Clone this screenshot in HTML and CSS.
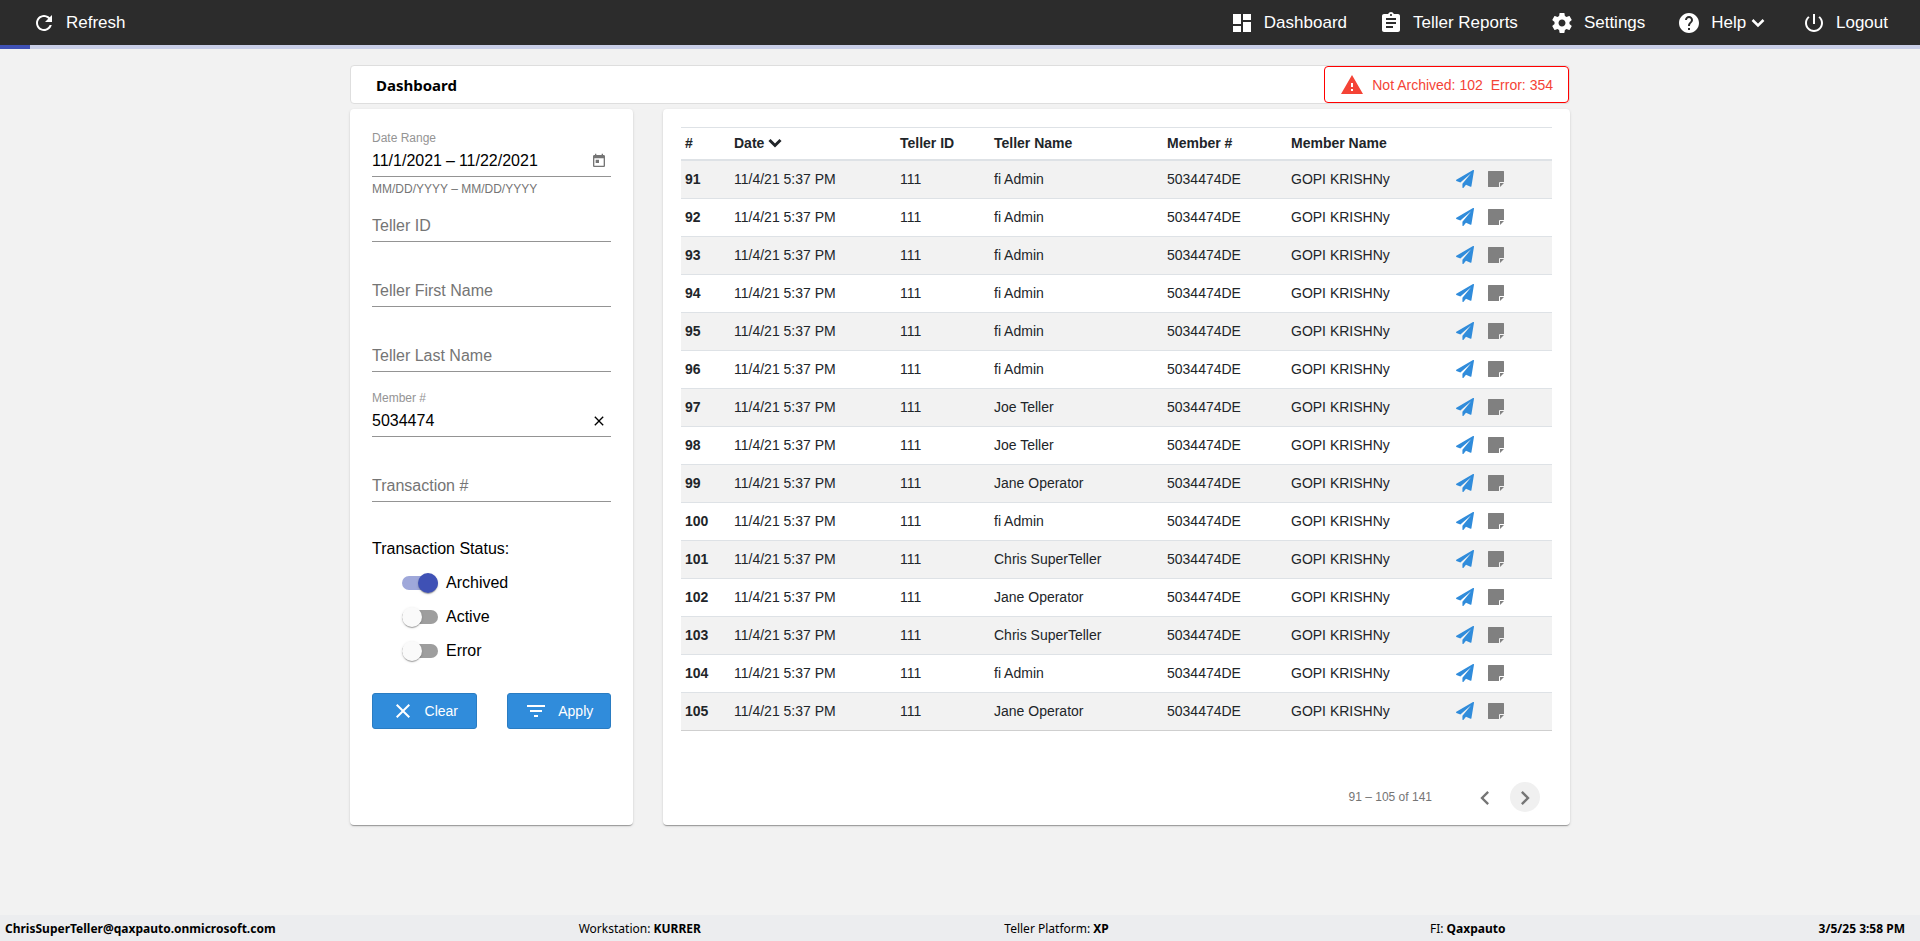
FILE: index.html
```html
<!DOCTYPE html>
<html lang="en">
  <head>
    <title>Dashboard</title>
    <meta charset="utf-8" />
    <meta name="viewport" content="width=device-width, initial-scale=1" />
    <link rel="stylesheet" href="styles.css">
  </head>
  <body>
    <svg class="sprite" aria-hidden="true">
      <symbol id="icon-plane" viewBox="0 0 1792 1792">
        <path d="M1764 11q33 24 27 64l-256 1536q-5 29-32 45-14 8-31 8-11 0-24-5l-453-185-242 295q-18 23-49 23-13 0-22-4-19-7-30.5-23.5t-11.5-36.5v-349l864-1059-1069 925-395-162q-37-14-40-55-2-40 32-59l1664-960q15-9 32-9 20 0 36 11z" />
      </symbol>
      <symbol id="icon-note" viewBox="0 0 16 16">
        <path d="M.5 0h15q.5 0 .5.5V11h-4q-1 0-1 1v4H.5q-.5 0-.5-.5V.5Q0 0 .5 0zM12 12h4l-4 4z" />
      </symbol>
      <symbol id="icon-close" viewBox="0 0 24 24">
        <path d="M19 6.410 17.590 5 12 10.590 6.410 5 5 6.410 10.590 12 5 17.590 6.410 19 12 13.410 17.590 19 19 17.590 13.410 12z" />
      </symbol>
    </svg>

    <header class="topbar">
      <button type="button" class="nav-item">
        <svg class="icon" viewBox="0 0 24 24"><path d="M17.650 6.350C16.200 4.900 14.210 4 12 4c-4.420 0-7.990 3.580-7.990 8s3.570 8 7.990 8c3.730 0 6.840-2.550 7.730-6h-2.080c-.82 2.330-3.040 4-5.650 4-3.310 0-6-2.690-6-6s2.690-6 6-6c1.660 0 3.140.69 4.220 1.780L13 11h7V4l-2.350 2.350z" /></svg>
        Refresh
      </button>

      <nav class="nav">
        <a href="#" class="nav-item">
          <svg class="icon" viewBox="0 0 24 24"><path d="M3 13h8V3H3v10zm0 8h8v-6H3v6zm10 0h8V11h-8v10zm0-18v6h8V3h-8z" /></svg>
          Dashboard
        </a>
        <a href="#" class="nav-item">
          <svg class="icon" viewBox="0 0 24 24"><path d="M19 3h-4.180C14.400 1.840 13.300 1 12 1c-1.300 0-2.400.84-2.820 2H5c-1.100 0-2 .9-2 2v14c0 1.100.9 2 2 2h14c1.100 0 2-.9 2-2V5c0-1.100-.9-2-2-2zm-7 0c.55 0 1 .45 1 1s-.45 1-1 1-1-.45-1-1 .45-1 1-1zm2 14H7v-2h7v2zm3-4H7v-2h10v2zm0-4H7V7h10v2z" /></svg>
          Teller Reports
        </a>
        <a href="#" class="nav-item">
          <svg class="icon" viewBox="0 0 24 24"><path d="M19.430 12.980c.04-.32.07-.64.07-.98s-.03-.66-.07-.98l2.110-1.650c.19-.15.24-.42.12-.64l-2-3.460c-.12-.22-.39-.3-.61-.22l-2.490 1c-.52-.4-1.080-.73-1.690-.98l-.38-2.650C14.460 2.180 14.250 2 14 2h-4c-.25 0-.46.18-.49.42l-.38 2.650c-.61.25-1.170.59-1.690.98l-2.490-1c-.23-.09-.49 0-.61.22l-2 3.460c-.13.22-.07.49.12.64l2.110 1.650c-.04.32-.07.65-.07.98s.03.66.07.98l-2.110 1.650c-.19.15-.24.42-.12.64l2 3.460c.12.22.39.3.61.22l2.490-1c.52.4 1.080.73 1.690.98l.38 2.650c.03.24.24.42.49.42h4c.25 0 .46-.18.49-.42l.38-2.650c.61-.25 1.170-.59 1.690-.98l2.490 1c.23.09.49 0 .61-.22l2-3.460c.12-.22.07-.49-.12-.64l-2.110-1.650zM12 15.500c-1.930 0-3.500-1.570-3.500-3.500s1.570-3.500 3.500-3.500 3.500 1.570 3.500 3.500-1.570 3.500-3.500 3.500z" /></svg>
          Settings
        </a>
        <button type="button" class="nav-item">
          <svg class="icon" viewBox="0 0 24 24"><path d="M12 2C6.480 2 2 6.480 2 12s4.480 10 10 10 10-4.480 10-10S17.520 2 12 2zm1 17h-2v-2h2v2zm2.070-7.750l-.9.92C13.450 12.900 13 13.500 13 15h-2v-.5c0-1.100.45-2.100 1.170-2.830l1.240-1.260c.37-.36.59-.86.59-1.410 0-1.100-.9-2-2-2s-2 .9-2 2H8c0-2.210 1.790-4 4-4s4 1.790 4 4c0 .88-.36 1.680-.93 2.250z" /></svg>
          <span>
            Help
            <svg class="chevron" viewBox="0 0 14 10"><path d="M1.500 2l5.500 5.500L12.500 2" /></svg>
          </span>
        </button>
        <a href="#" class="nav-item">
          <svg class="icon" viewBox="0 0 24 24"><path d="M13 3h-2v10h2V3zm4.830 2.170l-1.420 1.420C17.990 7.860 19 9.810 19 12c0 3.870-3.130 7-7 7s-7-3.130-7-7c0-2.190 1.010-4.140 2.580-5.420L6.170 5.170C4.230 6.820 3 9.260 3 12c0 4.970 4.030 9 9 9s9-4.030 9-9c0-2.740-1.230-5.180-3.170-6.830z" /></svg>
          Logout
        </a>
      </nav>
    </header>

    <div class="progress"><div class="progress-fill"></div></div>

    <main class="content">
      <div class="title-bar">
        <h1>Dashboard</h1>
        <div class="alert">
          <svg class="alert-icon" viewBox="0 0 24 24"><path d="M1 21h22L12 2 1 21zm12-3h-2v-2h2v2zm0-4h-2v-4h2v4z" /></svg>
          <span>Not Archived: 102</span>
          <span>Error: 354</span>
        </div>
      </div>

      <div class="panels">
        <form class="panel filters">
          <div class="field">
            <label for="date-start">Date Range</label>
            <div class="control">
              <input type="text" id="date-start" class="date-start" value="11/1/2021" />
              <span>–</span>
              <input type="text" class="date-end" value="11/22/2021" aria-label="End date" />
              <button type="button" class="icon-button" aria-label="Open calendar">
                <svg class="calendar" viewBox="0 0 24 24"><path d="M19 3h-1V1h-2v2H8V1H6v2H5c-1.110 0-1.990.9-1.990 2L3 19c0 1.100.89 2 2 2h14c1.100 0 2-.9 2-2V5c0-1.100-.9-2-2-2zm0 16H5V8h14v11zM7 10h5v5H7z" /></svg>
              </button>
            </div>
            <div class="hint">MM/DD/YYYY – MM/DD/YYYY</div>
          </div>

          <div class="field empty">
            <div class="control">
              <input type="text" placeholder="Teller ID" aria-label="Teller ID" />
            </div>
          </div>

          <div class="field empty">
            <div class="control">
              <input type="text" placeholder="Teller First Name" aria-label="Teller First Name" />
            </div>
          </div>

          <div class="field empty">
            <div class="control">
              <input type="text" placeholder="Teller Last Name" aria-label="Teller Last Name" />
            </div>
          </div>

          <div class="field">
            <label for="member">Member #</label>
            <div class="control">
              <input type="text" id="member" value="5034474" />
              <button type="button" class="icon-button" aria-label="Clear member">
                <svg class="clear-icon" viewBox="0 0 24 24"><use href="#icon-close" /></svg>
              </button>
            </div>
          </div>

          <div class="field empty">
            <div class="control">
              <input type="text" placeholder="Transaction #" aria-label="Transaction #" />
            </div>
          </div>

          <fieldset class="status">
            <legend>Transaction Status:</legend>
            <label class="toggle"><input type="checkbox" checked /> Archived</label>
            <label class="toggle"><input type="checkbox" /> Active</label>
            <label class="toggle"><input type="checkbox" /> Error</label>
          </fieldset>

          <div class="actions">
            <button type="reset" class="btn">
              <svg class="icon" viewBox="0 0 24 24"><use href="#icon-close" /></svg>
              Clear
            </button>
            <button type="button" class="btn">
              <svg class="icon" viewBox="0 0 24 24"><path d="M10 18h4v-2h-4v2zM3 6v2h18V6H3zm3 7h12v-2H6v2z" /></svg>
              Apply
            </button>
          </div>
        </form>

        <section class="panel results">
          <table class="table">
            <colgroup>
              <col class="col-num" />
              <col class="col-date" />
              <col class="col-id" />
              <col class="col-teller" />
              <col class="col-member" />
              <col class="col-name" />
              <col />
            </colgroup>
            <thead>
              <tr>
                <th>#</th>
                <th>
                  Date
                  <svg class="chevron" viewBox="0 0 14 10"><path d="M1.500 2l5.500 5.500L12.500 2" /></svg>
                </th>
                <th>Teller ID</th>
                <th>Teller Name</th>
                <th>Member #</th>
                <th>Member Name</th>
                <th></th>
              </tr>
            </thead>
            <tbody id="rows"></tbody>
          </table>

          <div class="pager">
            <span>91 – 105 of 141</span>
            <button type="button" class="page-button" aria-label="Previous page">
              <svg viewBox="0 0 24 24"><path d="M15.410 7.410 14 6l-6 6 6 6 1.410-1.410L10.830 12z" /></svg>
            </button>
            <button type="button" class="page-button active" aria-label="Next page">
              <svg viewBox="0 0 24 24"><path d="M10 6 8.590 7.410 13.170 12l-4.580 4.590L10 18l6-6z" /></svg>
            </button>
          </div>
        </section>
      </div>
    </main>

    <footer class="statusbar">
      <b>ChrisSuperTeller@qaxpauto.onmicrosoft.com</b>
      <span>Workstation: <b>KURRER</b></span>
      <span>Teller Platform: <b>XP</b></span>
      <span>FI: <b>Qaxpauto</b></span>
      <b>3/5/25 3:58 PM</b>
    </footer>

    <script src="script.js"></script>
  </body>
</html>
```
FILE: styles.css
```css
:root {
  --blue: #308cdb;
  --indigo: #3f51b5;
  --line: #dee2e6;
  --shadow: 0 2px 1px -1px rgba(0, 0, 0, 0.2), 0 1px 1px rgba(0, 0, 0, 0.14),
    0 1px 3px rgba(0, 0, 0, 0.12);
}

* {
  box-sizing: border-box;
}

body {
  display: flex;
  flex-direction: column;
  min-height: 100vh;
  margin: 0;
  background: #f2f2f2;
  color: #000;
  font-family: "Liberation Sans", Arial, sans-serif;
  font-size: 16px;
}

button,
input {
  padding: 0;
  border: 0;
  background: none;
  color: inherit;
  font: inherit;
}

button {
  cursor: pointer;
}

svg {
  fill: currentColor;
}

.sprite {
  display: none;
}

.icon {
  flex: none;
  width: 24px;
  height: 24px;
}

.chevron {
  width: 14px;
  height: 10px;
  fill: none;
  stroke: currentColor;
  stroke-width: 2.5;
}

/* top bar */

.topbar,
.nav,
.nav-item {
  display: flex;
  align-items: center;
}

.topbar {
  justify-content: space-between;
  height: 45px;
  padding: 0 32px;
  background: #2c2c2c;
  color: #fff;
  font-size: 17px;
}

.nav {
  gap: 32px;
}

.nav-item {
  gap: 10px;
  color: inherit;
  text-decoration: none;
}

.nav-item .chevron {
  margin-right: 5px;
}

.progress {
  height: 4px;
  background: #c9cee8;
}

.progress-fill {
  width: 30px;
  height: 100%;
  background: var(--indigo);
}

/* page */

.content {
  width: 100%;
  max-width: 1220px;
  margin: 16px auto;
}

.title-bar {
  display: flex;
  justify-content: space-between;
  align-items: center;
  height: 39px;
  padding-left: 25px;
  border: 1px solid #dedede;
  border-radius: 4px;
  background: #fff;
}

h1 {
  margin: 0;
  font-family: "Noto Sans", "Open Sans", sans-serif;
  font-size: 15px;
  font-weight: 700;
}

.alert {
  display: flex;
  align-items: center;
  gap: 8px;
  height: 37px;
  padding: 0 15px;
  border: 1px solid #f00;
  border-radius: 4px;
  color: #f44336;
  font-size: 14px;
}

.alert-icon {
  width: 24px;
  height: 24px;
}

.panels {
  display: flex;
  gap: 30px;
  margin-top: 5px;
}

.panel {
  border-radius: 4px;
  background: #fff;
  box-shadow: var(--shadow);
}

/* filters */

.filters {
  flex: none;
  width: 283px;
  padding: 22px;
}

.field {
  height: 65px;
}

.field.empty {
  padding-top: 14px;
}

.field label {
  display: block;
  height: 14px;
  color: #949494;
  font-size: 12px;
  line-height: 14px;
}

.control {
  display: flex;
  align-items: center;
  gap: 4px;
  height: 32px;
  border-bottom: 1px solid #949494;
}

.control input {
  flex: 1;
  min-width: 0;
  outline: 0;
}

.control .date-start {
  flex: none;
  width: 70px;
}

.control input::placeholder {
  color: #757575;
}

.icon-button {
  display: flex;
  justify-content: center;
  width: 24px;
}

.calendar {
  width: 16px;
  height: 16px;
  color: #757575;
}

.clear-icon {
  width: 16px;
  height: 16px;
}

.hint {
  padding-top: 4px;
  color: #757575;
  font-size: 12px;
  line-height: 16px;
}

.status {
  margin: 18px 0 0;
  padding: 0;
  border: 0;
}

.status legend {
  margin-bottom: 7px;
  padding: 0;
  line-height: 20px;
}

.toggle {
  display: flex;
  align-items: center;
  gap: 8px;
  height: 34px;
  padding-left: 30px;
}

.toggle input {
  display: flex;
  align-items: center;
  width: 36px;
  height: 14px;
  margin: 0;
  border-radius: 7px;
  background: #9e9e9e;
  appearance: none;
}

.toggle input::before {
  content: "";
  width: 20px;
  height: 20px;
  border-radius: 50%;
  background: #fafafa;
  box-shadow: var(--shadow);
}

.toggle input:checked {
  justify-content: flex-end;
  background: #9fa8da;
}

.toggle input:checked::before {
  background: var(--indigo);
}

.actions {
  display: flex;
  gap: 30px;
  margin-top: 25px;
}

.btn {
  display: flex;
  flex: 1;
  justify-content: center;
  align-items: center;
  gap: 10px;
  height: 36px;
  border: 1px solid #2a7cc2;
  border-radius: 3px;
  background: var(--blue);
  color: #fff;
  font-size: 14px;
}

/* results */

.results {
  flex: 1;
  padding: 18px 18px 13px;
}

.table {
  width: 100%;
  border-collapse: separate;
  border-spacing: 0;
  table-layout: fixed;
  color: #212529;
  font-size: 14px;
}

.table th,
.table td {
  height: 38px;
  padding: 0 4px 2px;
  border-bottom: 1px solid var(--line);
  text-align: left;
}

.table thead th {
  height: 34px;
  border-top: 1px solid var(--line);
  border-bottom-width: 2px;
}

.table thead .chevron {
  stroke-width: 3;
}

.table tbody tr:nth-child(odd) {
  background: #f2f2f2;
}

.table tbody tr:last-child > * {
  border-bottom-color: #cfcfcf;
}

.col-num {
  width: 49px;
}

.col-date {
  width: 166px;
}

.col-id {
  width: 94px;
}

.col-teller {
  width: 173px;
}

.col-member {
  width: 124px;
}

.col-name {
  width: 165px;
}

.row-actions {
  display: flex;
  align-items: center;
  gap: 14px;
}

.row-actions button {
  display: flex;
}

.send {
  width: 18px;
  height: 18px;
  color: var(--blue);
}

.note {
  width: 16px;
  height: 16px;
  color: #808080;
}

.pager {
  display: flex;
  justify-content: flex-end;
  align-items: center;
  gap: 10px;
  margin-top: 51px;
  padding-right: 12px;
  color: #757575;
  font-size: 12px;
}

.pager span {
  margin-right: 28px;
}

.page-button {
  display: flex;
  justify-content: center;
  align-items: center;
  width: 30px;
  height: 30px;
  padding-top: 2px;
  border-radius: 50%;
}

.page-button svg {
  width: 28px;
  height: 28px;
}

.page-button.active {
  background: #f0f0f0;
}

/* status bar */

.statusbar {
  display: grid;
  grid-template-columns: 31fr 23fr 23fr 21fr auto;
  align-items: center;
  height: 26px;
  margin-top: auto;
  padding: 0 15px 0 5px;
  background: #ecedef;
  font-family: "Noto Sans", "Open Sans", sans-serif;
  font-size: 12px;
}
```
FILE: script.js
```js
const tellers = [
  "fi Admin",
  "fi Admin",
  "fi Admin",
  "fi Admin",
  "fi Admin",
  "fi Admin",
  "Joe Teller",
  "Joe Teller",
  "Jane Operator",
  "fi Admin",
  "Chris SuperTeller",
  "Jane Operator",
  "Chris SuperTeller",
  "fi Admin",
  "Jane Operator",
]

const firstRow = 91

document.getElementById("rows").innerHTML = tellers
  .map(
    (teller, i) => `
      <tr>
        <th scope="row">${firstRow + i}</th>
        <td>11/4/21 5:37 PM</td>
        <td>111</td>
        <td>${teller}</td>
        <td>5034474DE</td>
        <td>GOPI KRISHNy</td>
        <td>
          <div class="row-actions">
            <button type="button" aria-label="Send"><svg class="send"><use href="#icon-plane" /></svg></button>
            <button type="button" aria-label="Notes"><svg class="note"><use href="#icon-note" /></svg></button>
          </div>
        </td>
      </tr>`
  )
  .join("")
```
